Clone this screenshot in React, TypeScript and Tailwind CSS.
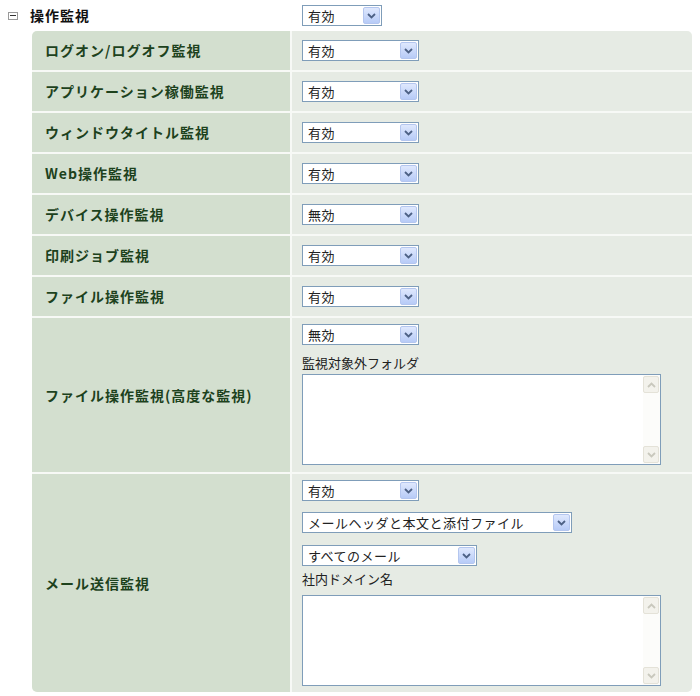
import React from 'react';

const jp = { fontFamily: '"MS UI Gothic", "Noto Sans CJK JP", sans-serif' };

const Chevron: React.FC<{ up?: boolean; color: string }> = ({ up, color }) => (
  <svg width="9" height="6" viewBox="0 0 9 6">
    <path
      d={up ? 'M1 5 L4.5 1.5 L8 5' : 'M1 1 L4.5 4.5 L8 1'}
      fill="none"
      stroke={color}
      strokeWidth="1.8"
    />
  </svg>
);

const Select: React.FC<{ value: string; width: number }> = ({ value, width }) => (
  <div
    className="h-[21px] bg-white border border-[#7f9db9] flex items-center justify-between pl-[5px] pr-[1px] shrink-0"
    style={{ width }}
  >
    <span className="text-[13px] leading-none text-[#222] tracking-[0.5px]">{value}</span>
    <span className="w-[17px] h-[17px] rounded-[2px] border border-[#b4c6ef] bg-gradient-to-b from-[#dfe8fd] to-[#b7cbf7] flex items-center justify-center">
      <Chevron color="#4d6185" />
    </span>
  </div>
);

const TextBox: React.FC = () => (
  <div className="w-[359px] h-[91px] bg-white border border-[#7f9db9] flex justify-end">
    <div className="w-[17px] h-full bg-[#fcfcfa] flex flex-col justify-between py-[1px] pr-[1px]">
      <span className="w-[16px] h-[17px] rounded-[2px] border border-[#e4e2d8] bg-[#f3f2ec] flex items-center justify-center">
        <Chevron up color="#c9c8bd" />
      </span>
      <span className="w-[16px] h-[17px] rounded-[2px] border border-[#e4e2d8] bg-[#f3f2ec] flex items-center justify-center">
        <Chevron color="#c9c8bd" />
      </span>
    </div>
  </div>
);

const Label: React.FC<{ text: string }> = ({ text }) => (
  <div className="bg-[#d3dfcf] flex items-center pl-[13px]">
    <span className="text-[14px] font-bold tracking-[1px] text-[#1d421d]">{text}</span>
  </div>
);

const simpleRows = [
  { label: 'ログオン/ログオフ監視', value: '有効' },
  { label: 'アプリケーション稼働監視', value: '有効' },
  { label: 'ウィンドウタイトル監視', value: '有効' },
  { label: 'Web操作監視', value: '有効' },
  { label: 'デバイス操作監視', value: '無効' },
  { label: '印刷ジョブ監視', value: '有効' },
  { label: 'ファイル操作監視', value: '有効' },
];

export default function App() {
  return (
    <div className="w-[700px] h-[696px] bg-white" style={jp}>
      {/* section header */}
      <div className="h-[31px] flex items-center">
        <div className="w-[30px] flex pl-[8px]">
          <span className="w-[10px] h-[8px] border border-[#9a9a9a] bg-white flex items-center justify-center">
            <span className="w-[6px] h-[1px] bg-[#333]" />
          </span>
        </div>
        <span className="w-[272px] text-[14px] font-bold tracking-[1px] text-[#111]">操作監視</span>
        <Select value="有効" width={80} />
      </div>

      <div className="ml-[32px] w-[660px] rounded-[5px] overflow-hidden grid grid-cols-[258px_400px] gap-[2px] bg-[#f7f9f6]">
        {simpleRows.map((r) => (
          <React.Fragment key={r.label}>
            <Label text={r.label} />
            <div className="h-[39px] bg-[#e6ebe4] flex items-center pl-[10px]">
              <Select value={r.value} width={117} />
            </div>
          </React.Fragment>
        ))}

        <Label text="ファイル操作監視(高度な監視)" />
        <div className="h-[154px] bg-[#e6ebe4] flex flex-col items-start pl-[10px] pt-[6px]">
          <Select value="無効" width={117} />
          <span className="mt-[10px] text-[13px] leading-[16px] text-[#222]">監視対象外フォルダ</span>
          <div className="mt-[3px]">
            <TextBox />
          </div>
        </div>

        <Label text="メール送信監視" />
        <div className="h-[218px] bg-[#e6ebe4] flex flex-col items-start pl-[10px] pt-[6px]">
          <Select value="有効" width={117} />
          <div className="mt-[11px]">
            <Select value="メールヘッダと本文と添付ファイル" width={270} />
          </div>
          <div className="mt-[12px]">
            <Select value="すべてのメール" width={175} />
          </div>
          <span className="mt-[5px] text-[13px] leading-[16px] text-[#222]">社内ドメイン名</span>
          <div className="mt-[8px]">
            <TextBox />
          </div>
        </div>
      </div>
    </div>
  );
}
